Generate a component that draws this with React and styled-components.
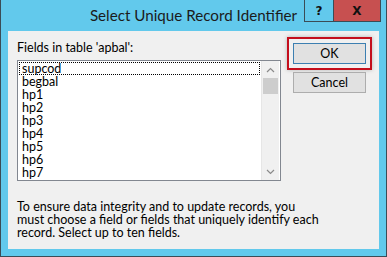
import React from "react";
import styled, { createGlobalStyle } from "styled-components";

const GlobalStyle = createGlobalStyle`
  html, body {
    margin: 0;
    padding: 0;
    background: #ffffff;
  }
  body {
    font-family: Lato, "Liberation Sans", sans-serif;
  }
`;

const fields = ["supcod", "begbal", "hp1", "hp2", "hp3", "hp4", "hp5", "hp6", "hp7"];

const Window = styled.div`
  width: 387px;
  height: 257px;
  box-sizing: border-box;
  background: #62c9ec;
  border-left: 1px solid #3b4c56;
  border-right: 1px solid #3b4c56;
  border-bottom: 1px solid #3b4c56;
  padding: 0 7px 7px 7px;
  display: flex;
  flex-direction: column;
`;

const TitleBar = styled.div`
  height: 31px;
  flex: none;
  display: grid;
  grid-template-columns: 1fr;
  margin: 0 -7px;
`;

const Title = styled.div`
  grid-area: 1 / 1;
  justify-self: center;
  align-self: start;
  margin-top: 5px;
  font-size: 15.2px;
  line-height: 20px;
  color: #1b1b1b;
`;

const Caption = styled.div`
  grid-area: 1 / 1;
  justify-self: end;
  align-self: start;
  display: flex;
  margin-right: 5px;
  height: 21px;
  border: 1px solid #3b4c56;
  border-top: none;
`;

const CaptionButton = styled.div`
  width: ${(p) => p.$w}px;
  height: 21px;
  display: flex;
  align-items: center;
  justify-content: center;
  background: ${(p) => (p.$close ? "#c75050" : "transparent")};
  border-left: ${(p) => (p.$close ? "1px solid #3b4c56" : "none")};
  font-family: "DejaVu Sans", sans-serif;
  font-weight: bold;
  font-size: 12px;
  color: #111;
`;

const Content = styled.div`
  flex: 1;
  background: #f0f0f0;
  display: grid;
  grid-template-columns: 264px 1fr;
  column-gap: 6px;
  padding: 6px 8px 0 9px;
`;

const LeftColumn = styled.div`
  display: flex;
  flex-direction: column;
  padding-top: 3px;
`;

const Label = styled.div`
  font-size: 12.5px;
  line-height: 16px;
  color: #000;
  margin-bottom: 4px;
`;

const ListBox = styled.div`
  height: 121px;
  box-sizing: border-box;
  border: 1px solid #828790;
  background: #fff;
  display: flex;
`;

const Items = styled.div`
  flex: 1;
  padding: 1px 1px 0 1px;
`;

const Item = styled.div`
  height: 13px;
  line-height: 13px;
  font-size: 12.5px;
  padding-left: 3px;
  color: #000;
  outline: ${(p) => (p.$focus ? "1px dotted #000" : "none")};
  outline-offset: -1px;
`;

const ScrollBar = styled.div`
  width: 17px;
  border-left: 1px solid #e6e6e6;
  background: #f0f0f0;
  display: flex;
  flex-direction: column;
  margin: 0 1px 0 0;
`;

const ArrowBox = styled.div`
  height: 17px;
  display: flex;
  align-items: center;
  justify-content: center;
`;

const Track = styled.div`
  flex: 1;
  display: flex;
  flex-direction: column;
`;

const Thumb = styled.div`
  height: 16px;
  margin: 0 1px;
  background: #cdcdcd;
`;

const Description = styled.div`
  margin-top: 19px;
  font-size: 12.5px;
  line-height: 13px;
  color: #000;
  white-space: nowrap;
`;

const RightColumn = styled.div`
  display: flex;
  flex-direction: column;
  align-items: flex-start;
`;

const Highlight = styled.div`
  border: 2px solid #c40e1c;
  padding: 4px;
  box-shadow: 0 0 4px rgba(0, 0, 0, 0.25);
`;

const Button = styled.div`
  width: 73px;
  height: 21px;
  box-sizing: border-box;
  border: 1px solid ${(p) => (p.$default ? "#3c7fb1" : "#adadad")};
  background: #e1e1e1;
  display: flex;
  align-items: center;
  justify-content: center;
  font-size: 12.5px;
  color: #000;
`;

const CancelWrap = styled.div`
  margin-top: 2px;
  padding-left: 6px;
`;

const Chevron = ({ up }) => (
  <svg width="9" height="6" viewBox="0 0 9 6">
    <path
      d={up ? "M1 5 L4.5 1.5 L8 5" : "M1 1 L4.5 4.5 L8 1"}
      fill="none"
      stroke="#8a8a8a"
      strokeWidth="1.2"
    />
  </svg>
);

export default function App() {
  return (
    <>
      <GlobalStyle />
      <Window>
        <TitleBar>
          <Title>Select Unique Record Identifier</Title>
          <Caption>
            <CaptionButton $w={28}>?</CaptionButton>
            <CaptionButton $w={46} $close>
              X
            </CaptionButton>
          </Caption>
        </TitleBar>
        <Content>
          <LeftColumn>
            <Label>Fields in table 'apbal':</Label>
            <ListBox>
              <Items>
                {fields.map((f, i) => (
                  <Item key={f} $focus={i === 0}>
                    {f}
                  </Item>
                ))}
              </Items>
              <ScrollBar>
                <ArrowBox>
                  <Chevron up />
                </ArrowBox>
                <Track>
                  <Thumb />
                </Track>
                <ArrowBox>
                  <Chevron />
                </ArrowBox>
              </ScrollBar>
            </ListBox>
            <Description>
              To ensure data integrity and to update records, you
              <br />
              must choose a field or fields that uniquely identify each
              <br />
              record. Select up to ten fields.
            </Description>
          </LeftColumn>
          <RightColumn>
            <Highlight>
              <Button $default>OK</Button>
            </Highlight>
            <CancelWrap>
              <Button>Cancel</Button>
            </CancelWrap>
          </RightColumn>
        </Content>
      </Window>
    </>
  );
}
